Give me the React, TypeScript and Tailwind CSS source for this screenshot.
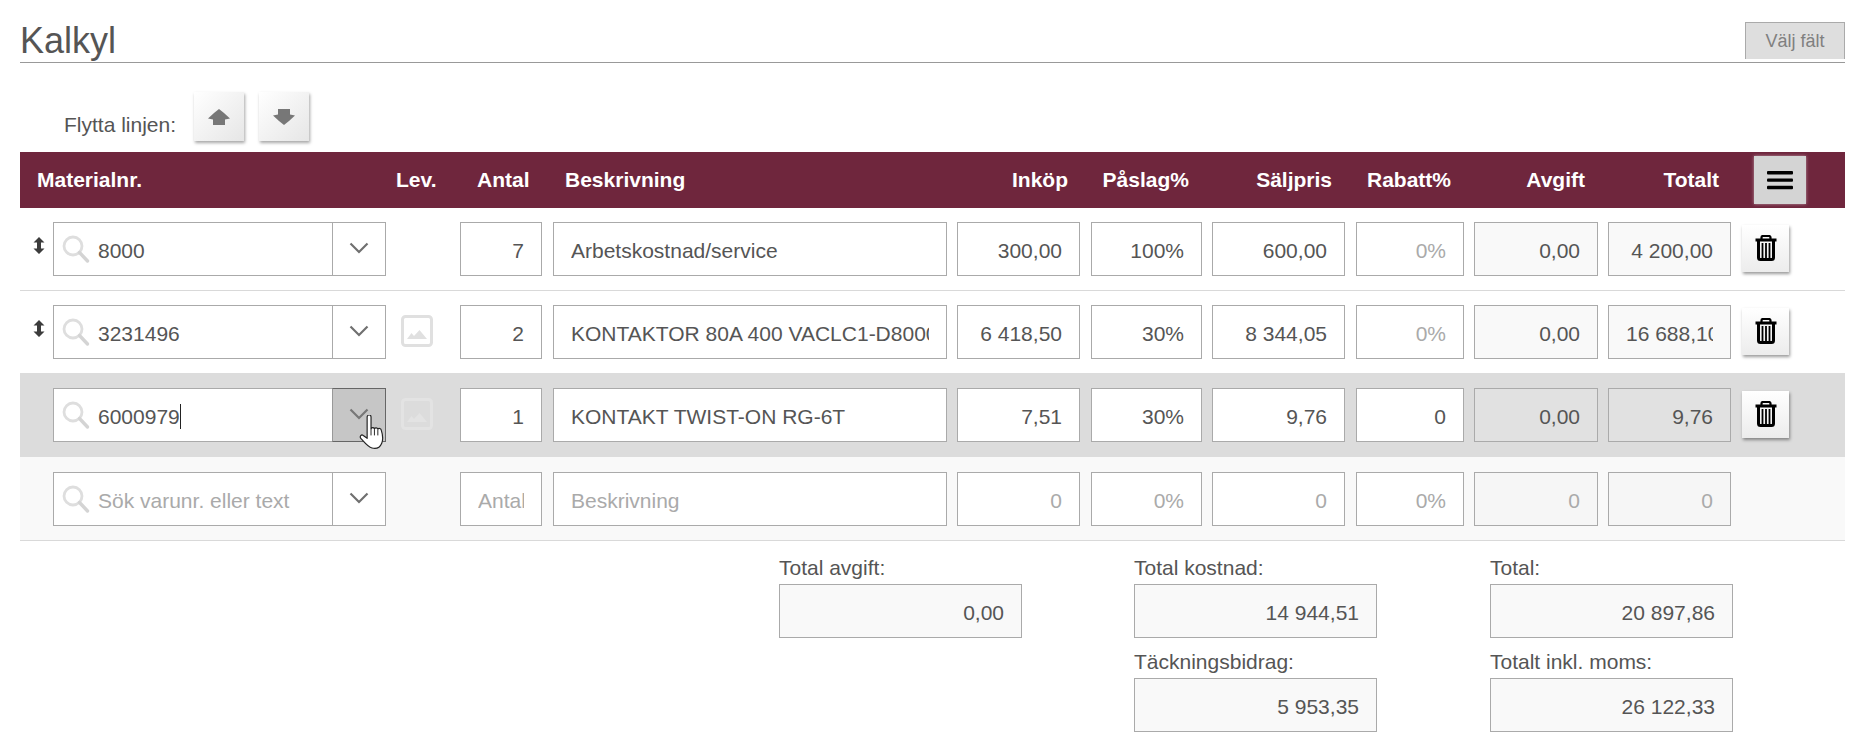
import React from "react";

const Search = () => (
  <svg width="30" height="30" viewBox="0 0 30 30" className="shrink-0 ml-[7px]" fill="none">
    <circle cx="12" cy="12" r="9" stroke="#dedede" strokeWidth="2.8" />
    <path d="M18.5 18.5 L26.5 27" stroke="#d4d4d4" strokeWidth="3.4" strokeLinecap="round" />
  </svg>
);

const Chevron = ({ c = "#707070" }: { c?: string }) => (
  <svg width="20" height="12" viewBox="0 0 20 12" fill="none">
    <path d="M1.5 1.5 L10 10 L18.5 1.5" stroke={c} strokeWidth="2.2" />
  </svg>
);

const Trash = () => (
  <svg width="22" height="26" viewBox="0 0 22 26" fill="none">
    <path d="M6.5 4 V2.5 a1.5 1.5 0 0 1 1.5-1.5 h6 a1.5 1.5 0 0 1 1.5 1.5 V4" stroke="#000" strokeWidth="2.2" />
    <path d="M0.5 5 H21.5" stroke="#000" strokeWidth="3" />
    <path d="M3.5 5 V22.5 a2 2 0 0 0 2 2 h11 a2 2 0 0 0 2-2 V5" stroke="#000" strokeWidth="3" />
    <path d="M7.5 8 V23 M11 8 V23 M14.5 8 V23" stroke="#000" strokeWidth="1.8" />
  </svg>
);

const Sort = () => (
  <svg width="12" height="17" viewBox="0 0 12 17" fill="#3c3c3c">
    <path d="M6 0 L11.5 5.5 H8 V11.5 H11.5 L6 17 L0.5 11.5 H4 V5.5 H0.5 Z" />
  </svg>
);

const Pic = ({ c = "#e0e0e0" }: { c?: string }) => (
  <svg width="32" height="32" viewBox="0 0 32 32" fill="none">
    <rect x="1.5" y="1.5" width="29" height="29" rx="3" stroke={c} strokeWidth="3" />
    <path d="M6 24 L10.5 18 L13 21 L18.5 15 L26 24 Z" fill={c} />
  </svg>
);

const border = "border border-[#aaaaaa]";

function Combo({ value, placeholder, hover, caret }: { value?: string; placeholder?: string; hover?: boolean; caret?: boolean }) {
  return (
    <div className={`flex w-[333px] h-[54px] bg-white ${border}`}>
      <div className="flex-1 flex items-center min-w-0">
        <Search />
        <span className={`ml-[7px] pt-[4px] ${value ? "text-[#555555]" : "text-[#aaaaaa]"}`}>{value ?? placeholder}</span>
        {caret && <span className="w-px h-[25px] mt-[2px] bg-[#222222]" />}
      </div>
      {hover ? (
        <div className="w-[54px] -m-px ml-0 flex items-center justify-center pb-[2px] bg-[#c6c6c6] border border-[#666666] border-l-[#999999]">
          <Chevron c="#777777" />
        </div>
      ) : (
        <div className="w-[53px] flex items-center justify-center pb-[2px] border-l border-[#aaaaaa]">
          <Chevron />
        </div>
      )}
    </div>
  );
}

function Cell({ w, value, placeholder, left, ro, shade, muted }: { w: string; value?: string; placeholder?: string; left?: boolean; ro?: boolean; shade?: string; muted?: boolean }) {
  return (
    <input
      readOnly
      value={value ?? ""}
      placeholder={placeholder}
      className={`${w} h-[54px] ${border} px-[17px] pt-[4px] outline-none ${left ? "text-left" : "text-right"} ${ro ? shade ?? "bg-[#f9f9f9]" : "bg-white"} ${muted ? "text-[#aaaaaa]" : "text-[#555555]"} placeholder:text-[#aaaaaa]`}
    />
  );
}

const TrashBtn = () => (
  <button className="w-[47px] h-[47px] -mt-[2px] bg-gradient-to-b from-white to-[#ececec] shadow-[1px_2px_3px_rgba(0,0,0,0.4)] flex items-center justify-center">
    <Trash />
  </button>
);

type Row = {
  code?: string;
  ph?: boolean;
  pic?: string;
  sort?: boolean;
  antal?: string;
  desc?: string;
  ink: string;
  pas: string;
  salj: string;
  rab: string;
  rabMuted?: boolean;
  avg: string;
  tot: string;
};

function LineRow({ r, cls, shade, hover, caret, trash = true }: { r: Row; cls: string; shade?: string; hover?: boolean; caret?: boolean; trash?: boolean }) {
  const m = r.ph;
  return (
    <div className={`flex items-center pl-[7px] ${cls}`}>
      <div className="w-[26px] flex justify-center pr-[3px] -mt-[8px]">{r.sort && <Sort />}</div>
      <Combo value={r.code} placeholder="Sök varunr. eller text" hover={hover} caret={caret} />
      <div className="w-[74px] flex justify-start pl-[15px] -mt-[2px]">{r.pic !== undefined && <Pic c={r.pic} />}</div>
      <Cell w="w-[82px]" value={r.antal} placeholder="Antal" />
      <div className="w-[11px]" />
      <Cell w="w-[394px]" value={r.desc} placeholder="Beskrivning" left />
      <div className="w-[10px]" />
      <Cell w="w-[123px]" value={r.ink} muted={m} />
      <div className="w-[11px]" />
      <Cell w="w-[111px]" value={r.pas} muted={m} />
      <div className="w-[10px]" />
      <Cell w="w-[133px]" value={r.salj} muted={m} />
      <div className="w-[11px]" />
      <Cell w="w-[108px]" value={r.rab} muted={r.rabMuted} />
      <div className="w-[10px]" />
      <Cell w="w-[124px]" value={r.avg} ro shade={shade} muted={m} />
      <div className="w-[10px]" />
      <Cell w="w-[123px]" value={r.tot} ro shade={shade} muted={m} />
      <div className="w-[11px]" />
      {trash && <TrashBtn />}
    </div>
  );
}

const Sum = ({ label, value }: { label: string; value: string }) => (
  <div className="flex flex-col">
    <div className="h-[23px] leading-[21px] mb-[4px] text-[#555555]">{label}</div>
    <div className={`w-[243px] h-[54px] bg-[#f9f9f9] ${border} flex items-center justify-end pt-[4px] pr-[17px] text-[#555555]`}>{value}</div>
  </div>
);

const Head = ({ w, children, right }: { w: string; children: React.ReactNode; right?: boolean }) => (
  <div className={`${w} shrink-0 ${right ? "text-right" : ""}`}>{children}</div>
);

export default function App() {
  return (
    <div className="w-[1875px] h-[745px] overflow-hidden bg-white pl-[20px] pr-[30px] text-[21px] relative" style={{ fontFamily: '"Liberation Sans", Arial, sans-serif' }}>
      <div className="h-[63px] flex items-end justify-between border-b border-[#999999]">
        <div className="text-[36px] leading-[50px] text-[#555555] -mb-[4px]">Kalkyl</div>
        <button className="w-[100px] h-[37px] mb-[3px] bg-[#dedede] border border-b-0 border-[#aaaaaa] text-[18px] text-[#808080]">Välj fält</button>
      </div>
      <div className="h-[89px] flex items-start pl-[44px] pt-[29px] text-[#555555]">
        <span className="mt-[19px] leading-[28px]">Flytta linjen:</span>
        <button className="ml-[18px] w-[50px] h-[49px] bg-gradient-to-br from-white to-[#e6e6e6] shadow-[1px_2px_3px_rgba(0,0,0,0.35)] flex items-center justify-center">
          <svg width="22" height="16" viewBox="0 0 22 16" fill="#777777"><path d="M11 0 L16 4 L22 9.5 L17 10.5 V16 H5 V10.5 L0 9.5 L6 4 Z" /></svg>
        </button>
        <button className="ml-[15px] w-[50px] h-[49px] bg-gradient-to-br from-white to-[#e6e6e6] shadow-[1px_2px_3px_rgba(0,0,0,0.35)] flex items-center justify-center">
          <svg width="22" height="16" viewBox="0 0 22 16" fill="#777777"><path d="M5 0 H17 V5.5 L22 6.5 L16 12 L11 16 L6 12 L0 6.5 L5 5.5 Z" /></svg>
        </button>
      </div>
      <div className="h-[56px] bg-[#6f263d] flex items-center text-white font-bold pb-[1px]">
        <Head w="w-[376px] pl-[17px]">Materialnr.</Head>
        <Head w="w-[81px]">Lev.</Head>
        <Head w="w-[88px]">Antal</Head>
        <Head w="w-[400px]">Beskrivning</Head>
        <Head w="w-[103px]" right>Inköp</Head>
        <Head w="w-[121px]" right>Påslag%</Head>
        <Head w="w-[143px]" right>Säljpris</Head>
        <Head w="w-[119px]" right>Rabatt%</Head>
        <Head w="w-[134px]" right>Avgift</Head>
        <Head w="w-[134px]" right>Totalt</Head>
        <div className="ml-[35px] w-[52px] h-[48px] bg-[#d4d4d4] shadow-[0_0_3px_rgba(255,255,255,0.5)] flex items-center justify-center">
          <svg width="26" height="20" viewBox="0 0 26 20" fill="#000"><rect y="1" width="26" height="3.4" rx="1" /><rect y="8.4" width="26" height="3.4" rx="1" /><rect y="15.8" width="26" height="3.4" rx="1" /></svg>
        </div>
      </div>
      <div className="flex flex-col">
        <LineRow cls="h-[83px] bg-white border-b border-[#d9d9d9]" r={{ code: "8000", sort: true, antal: "7", desc: "Arbetskostnad/service", ink: "300,00", pas: "100%", salj: "600,00", rab: "0%", rabMuted: true, avg: "0,00", tot: "4 200,00" }} />
        <LineRow cls="h-[82px] bg-white" r={{ code: "3231496", sort: true, pic: "#e0e0e0", antal: "2", desc: "KONTAKTOR 80A 400 VACLC1-D8000", ink: "6 418,50", pas: "30%", salj: "8 344,05", rab: "0%", rabMuted: true, avg: "0,00", tot: "16 688,10" }} />
        <LineRow cls="h-[84px] bg-[#dcdcdc]" shade="bg-[#e1e1e1]" hover caret r={{ code: "6000979", pic: "#e3e3e3", antal: "1", desc: "KONTAKT TWIST-ON RG-6T", ink: "7,51", pas: "30%", salj: "9,76", rab: "0", avg: "0,00", tot: "9,76" }} />
        <LineRow cls="h-[84px] bg-[#f9f9f9] border-b border-[#d9d9d9]" shade="bg-[#f6f6f6]" trash={false} r={{ ph: true, ink: "0", pas: "0%", salj: "0", rab: "0%", rabMuted: true, avg: "0", tot: "0" }} />
      </div>
      <div className="flex pl-[759px] pt-[16px]">
        <div className="w-[355px]"><Sum label="Total avgift:" value="0,00" /></div>
        <div className="w-[356px] flex flex-col gap-[13px]"><Sum label="Total kostnad:" value="14 944,51" /><Sum label="Täckningsbidrag:" value="5 953,35" /></div>
        <div className="flex flex-col gap-[13px]"><Sum label="Total:" value="20 897,86" /><Sum label="Totalt inkl. moms:" value="26 122,33" /></div>
      </div>
      <svg className="absolute left-[359px] top-[415px]" width="26" height="35" viewBox="0 0 26 36">
        <path d="M8 2 a2 2 0 0 1 4 0 V14 a2 2 0 0 1 3.5 0 a2 2 0 0 1 3.5 0.5 a2 2 0 0 1 3.5 1 C24 20 25 24 23 29 C21 34 17 35 13 34 C9 33 6 29 1.5 24 C0 22 2 19.5 4 21 L8 24 Z" fill="#fff" stroke="#222" strokeWidth="1.2" strokeLinejoin="round" />
        <path d="M12 14 V21 M15.5 14.5 V21 M19 15 V21" stroke="#222" strokeWidth="1" />
      </svg>
    </div>
  );
}
